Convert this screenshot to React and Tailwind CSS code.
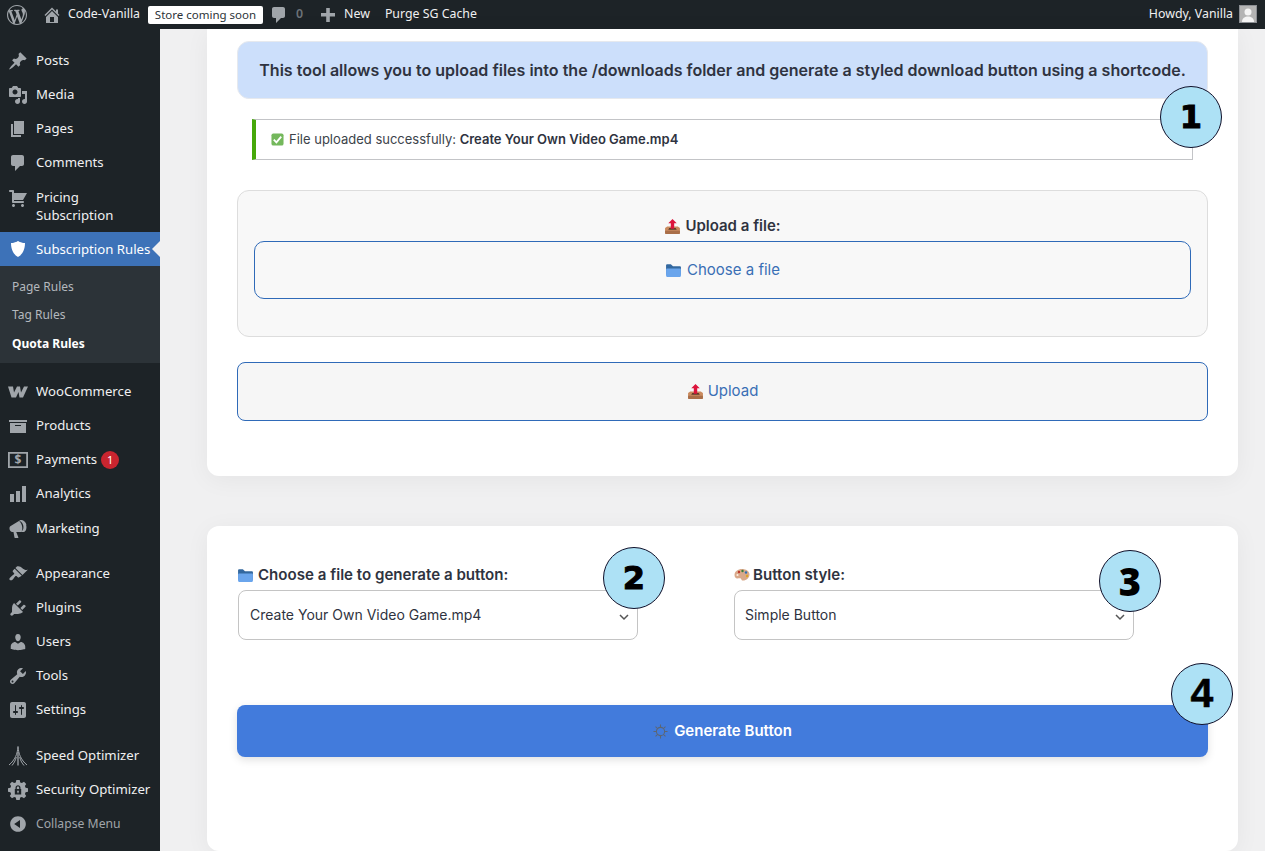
import React from "react";

const P = ({ d, className = "", size = 20 }) => (
  <svg viewBox="0 0 20 20" width={size} height={size} className={className} fill="currentColor" aria-hidden="true">
    <path d={d} fillRule="evenodd" />
  </svg>
);

const icons = {
  wp: "M20 10c0-5.51-4.5-10-10-10C4.48 0 0 4.49 0 10c0 5.52 4.48 10 10 10 5.5 0 10-4.48 10-10zM7.78 15.37L4.37 6.22c.55-.02 1.17-.08 1.17-.08.5-.06.44-1.13-.06-1.11 0 0-1.45.11-2.37.11-.18 0-.37 0-.58-.01C4.12 2.69 6.87 1.11 10 1.11c2.33 0 4.45.87 6.05 2.34-.68-.11-1.65.39-1.65 1.58 0 .74.45 1.36.9 2.1.35.61.55 1.36.55 2.46 0 1.49-1.4 5-1.4 5l-3.03-8.37c.54-.02.82-.17.82-.17.5-.05.44-1.25-.06-1.22 0 0-1.44.12-2.38.12-.87 0-2.33-.12-2.33-.12-.5-.03-.56 1.2-.06 1.22l.92.08 1.26 3.41zM17.41 10c.24-.64.74-1.87.43-4.25.7 1.29 1.05 2.71 1.05 4.25 0 3.29-1.73 6.24-4.4 7.78.97-2.59 1.94-5.2 2.92-7.78zM6.1 18.09C3.12 16.65 1.11 13.53 1.11 10c0-1.3.23-2.48.72-3.59C3.25 10.3 4.67 14.2 6.1 18.09zm4.03-6.63l2.58 6.98c-.86.29-1.76.45-2.71.45-.79 0-1.57-.11-2.29-.33.81-2.38 1.62-4.74 2.42-7.1z",
  home: "M16 8.5l1.53 1.53-1.06 1.06L10 4.62l-6.47 6.47-1.06-1.06L10 2.5l4 4v-2h2v4zm-6-2.46l6 5.99V18H4v-5.97zM12 17v-5H8v5h4z",
  comment: "M5 2h9c1.1 0 2 .9 2 2v7c0 1.1-.9 2-2 2h-2l-5 5v-5H5c-1.1 0-2-.9-2-2V4c0-1.1.9-2 2-2z",
  plus: "M17 8v3.5h-5.2V17H8.2v-5.5H3V8h5.2V3h3.6v5H17z",
  posts: "M10.44 3.02l1.82-1.82 6.36 6.35-1.83 1.82c-1.05-.68-2.48-.57-3.41.36l-.75.75c-.92.93-1.04 2.35-.35 3.41l-1.83 1.82-2.41-2.41-2.8 2.79c-.42.42-3.38 2.71-3.8 2.29s1.86-3.39 2.28-3.81l2.79-2.79L4.1 9.36l1.83-1.82c1.05.69 2.48.57 3.4-.36l.75-.75c.93-.92 1.05-2.35.36-3.41z",
  media: "M13 11V4c0-.55-.45-1-1-1h-1.67L9 1H5L3.67 3H2c-.55 0-1 .45-1 1v7c0 .55.45 1 1 1h10c.55 0 1-.45 1-1zM7 4.5c1.38 0 2.5 1.12 2.5 2.5S8.38 9.5 7 9.5 4.5 8.38 4.5 7 5.62 4.5 7 4.5zM14 6h5v10.5c0 1.38-1.12 2.5-2.5 2.5S14 17.88 14 16.5s1.12-2.5 2.5-2.5c.17 0 .34.02.5.05V9h-3V6zm-4 8.05V13h2v3.5c0 1.38-1.12 2.5-2.5 2.5S7 17.88 7 16.5 8.12 14 9.5 14c.17 0 .34.02.5.05z",
  pages: "M6 15V2h10v13H6zm-1 1h8v2H3V5h2v11z",
  cart: "M6 13h9c.55 0 1 .45 1 1s-.45 1-1 1H5c-.55 0-1-.45-1-1V4H2c-.55 0-1-.45-1-1s.45-1 1-1h3c.55 0 1 .45 1 1v2h13l-4 7H6v1zm-.5 3c.83 0 1.5.67 1.5 1.5S6.33 19 5.5 19 4 18.33 4 17.5 4.67 16 5.5 16zm9 0c.83 0 1.5.67 1.5 1.5s-.67 1.5-1.5 1.5-1.5-.67-1.5-1.5.67-1.5 1.5-1.5z",
  shield: "M10 2s3 2 7 2c0 11-7 14-7 14S3 15 3 4c4 0 7-2 7-2z",
  woo: "M0 4.500h5l1 6 3-6h3l1 6 3-6h4l-5 11h-3.500l-1-5.500-2.500 5.500H3.500z",
  archive: "M19 4v2H1V4h18zM2 7h16v10H2V7zm11 3V9H7v1h6z",
  pay: "M0 2h20v16H0V2zm1.800 1.800v12.400h16.400V3.800z",
  chart: "M18 18V2h-4v16h4zm-6 0V7H8v11h4zm-6 0v-8H2v8h4z",
  megaphone: "M18.15 5.94c.46 1.62.38 3.22-.02 4.48-.42 1.28-1.26 2.18-2.3 2.48-.16.06-.26.06-.4.06-.06.02-.12.02-.18.02-.06.02-.14.02-.22.02h-6.8l2.22 5.5c.02.14-.06.26-.14.34-.08.1-.24.16-.34.16H6.95c-.1 0-.26-.06-.34-.16-.08-.08-.16-.2-.14-.34l-1-5.5H4.25l-.02-.02c-.5.06-1.08-.18-1.54-.62s-.88-1.08-1.06-1.88c-.24-.8-.2-1.56-.02-2.2.2-.62.58-1.08 1.06-1.3l.02-.02 9-5.4c.1-.06.18-.1.24-.16.06-.04.14-.08.24-.12.16-.08.28-.12.5-.18 1.04-.3 2.24.1 3.3.9 1.04.82 1.96 2.1 2.42 3.7zm-4.58 5.98h-.02c.4-.1.74-.34 1.04-.7.58-.7.86-1.76.86-3.04-.02-.64-.1-1.3-.28-1.98-.46-1.62-1.36-2.88-2.42-3.6-.52-.34-1.06-.56-1.56-.62.44.36.42.4.98 1.12l.1.12.06.08c.74.94 1.28 2.1 1.64 3.42.34 1.3.42 2.56.26 3.72-.18 1.14-.62 2.12-1.24 2.76z",
  appearance: "M14.48 11.06L7.41 3.99l1.5-1.5c.5-.56 2.3-.47 3.51.32 1.21.8 1.43 1.28 2.91 2.1 1.18.64 2.45 1.26 4.45.85zm-.71.71L6.7 4.7 4.93 6.47c-.39.39-.39 1.02 0 1.41l1.06 1.06c.39.39.39 1.03 0 1.42-.6.6-1.43 1.11-2.21 1.69-.35.26-.7.53-1.01.84C1.43 13.71.96 15.12 1.75 15.9c.78.79 2.19.32 3.01-.51.31-.31.58-.66.84-1.01.58-.78 1.09-1.61 1.69-2.21.39-.39 1.02-.39 1.41 0l1.06 1.06c.39.39 1.02.39 1.41 0z",
  plugins: "M13.11 4.36L9.87 7.6 8 5.73l3.24-3.24c.35-.34 1.05-.2 1.56.32.52.51.66 1.21.31 1.55zm-8 1.77l.91-1.12 9.01 9.01-1.19.84c-.71.71-2.63 1.16-3.82 1.16H6.14L4.9 17.26c-.59.59-1.54.59-2.12 0-.59-.58-.59-1.53 0-2.12l1.24-1.24v-3.88c0-1.13.4-3.19 1.09-3.89zm7.26 3.97l3.24-3.24c.34-.35 1.04-.21 1.55.31.52.51.66 1.21.31 1.55l-3.24 3.25z",
  users: "M10 9.25c-2.27 0-2.73-3.44-2.73-3.44C7 4.02 7.82 2 9.97 2c2.16 0 2.98 2.02 2.71 3.81 0 0-.41 3.44-2.68 3.44zm0 2.57L12.72 10c2.39 0 4.52 2.33 4.52 4.53v2.49s-3.65 1.13-7.24 1.13c-3.65 0-7.24-1.13-7.24-1.13v-2.49c0-2.25 1.94-4.48 4.47-4.48z",
  tools: "M16.68 9.77c-1.34 1.34-3.3 1.67-4.95.99l-5.41 6.52c-.99.99-2.59.99-3.58 0s-.99-2.59 0-3.57l6.52-5.42c-.68-1.65-.35-3.61.99-4.95 1.28-1.28 3.12-1.62 4.72-1.06l-2.89 2.89 2.82 2.82 2.86-2.87c.53 1.58.18 3.39-1.08 4.65zM3.81 16.21c.4.39 1.04.39 1.43 0 .4-.4.4-1.04 0-1.43-.39-.4-1.03-.4-1.43 0-.39.39-.39 1.03 0 1.43z",
  settings: "M18 16V4c0-1.1-.9-2-2-2H4c-1.1 0-2 .9-2 2v12c0 1.1.9 2 2 2h12c1.1 0 2-.9 2-2zM8 11h1c.55 0 1 .45 1 1s-.45 1-1 1H8v1.5c0 .28-.22.5-.5.5s-.5-.22-.5-.5V13H6c-.55 0-1-.45-1-1s.45-1 1-1h1V5.5c0-.28.22-.5.5-.5s.5.22.5.5V11zm5-2h-1c-.55 0-1-.45-1-1s.45-1 1-1h1V5.5c0-.28.22-.5.5-.5s.5.22.5.5V7h1c.55 0 1 .45 1 1s-.45 1-1 1h-1v5.5c0 .28-.22.5-.5.5s-.5-.22-.5-.5V9z",
  gear: "M8.300 0h3.400l.5 2.400 1.700.7L16 1.800l2.200 2.200-1.300 2.100.7 1.700 2.400.5v3.400l-2.400.5-.7 1.700 1.300 2.100-2.200 2.200-2.100-1.300-1.700.7-.5 2.400H8.300l-.5-2.400-1.700-.7L4 18.200 1.800 16l1.300-2.100-.7-1.700L0 11.700V8.300l2.400-.5.7-1.700L1.800 4 4 1.800l2.100 1.300 1.700-.7L8.300 0zM10 5.200C8.600 5.200 7.500 6.300 7.500 7.700V9H6.800v5.500h6.400V9h-.7V7.700c0-1.400-1.100-2.500-2.500-2.500zM10 6.500c.7 0 1.200.5 1.200 1.200V9H8.800V7.700c0-.7.500-1.200 1.200-1.200zM10 10.500c.5 0 .9.400.9.900 0 .3-.2.600-.4.800v1.100h-1v-1.100c-.2-.2-.4-.5-.4-.8 0-.5.400-.9.900-.9z",
  collapse: "M10 2.160c4.330 0 7.840 3.510 7.840 7.840s-3.510 7.840-7.840 7.840S2.160 14.330 2.160 10 5.710 2.160 10 2.160zm2 11.720V6.120L6.180 9.970z",
};

const Speed = () => (
  <svg viewBox="0 0 20 20" width={20} height={20} fill="none" stroke="currentColor" strokeWidth="1" aria-hidden="true">
    <path d="M10 0.500C9.500 8 7 14 1 19" />
    <path d="M10 0.500C10.500 8 13 14 19 19" />
    <path d="M10 6V19.500" strokeWidth="1.300" />
    <path d="M8.300 11C7.500 15 5.500 17.500 4 19.500" />
    <path d="M11.700 11C12.500 15 14.500 17.500 16 19.500" />
  </svg>
);

const Upload = ({ size = 17 }) => (
  <svg viewBox="0 0 16 16" width={size} height={size} aria-hidden="true">
    <path d="M1 9.500 3 8h10l2 1.500V14a1 1 0 0 1-1 1H2a1 1 0 0 1-1-1V9.500z" fill="#c98a5e" />
    <path d="M1 12h14v2a1 1 0 0 1-1 1H2a1 1 0 0 1-1-1v-2z" fill="#a96e48" />
    <path d="M5 9.500h6l1 1.500H4z" fill="#5c3a2a" />
    <path d="M8 1 12 5H9.600v5H6.400V5H4z" fill="#dc143c" />
  </svg>
);

const Folder = ({ size = 17 }) => (
  <svg viewBox="0 0 16 16" width={size} height={size} aria-hidden="true">
    <path d="M1 3A1 1 0 0 1 2 2h3.500L7.500 4H14a1 1 0 0 1 1 1v7H1V3z" fill="#33689f" />
    <path d="M1 7a1 1 0 0 1 1-1h12a1 1 0 0 1 1 1v6a1 1 0 0 1-1 1H2a1 1 0 0 1-1-1V7z" fill="#6aa5ec" />
  </svg>
);

const Palette = ({ size = 16 }) => (
  <svg viewBox="0 0 16 16" width={size} height={size} aria-hidden="true">
    <path d="M8 2c4 0 7.500 2.200 7.500 5.500S12.500 13.500 9 13.500c-1.500 0-1.500-1-2-1.800-.5-.8-2-.5-3.500-.3C2 11.600.5 10.500.5 8 .5 4.500 4 2 8 2z" fill="#d9a98a" />
    <circle cx="5" cy="5" r="1.200" fill="#c0392b" />
    <circle cx="8.500" cy="4" r="1.200" fill="#3b7d3b" />
    <circle cx="12" cy="5.500" r="1.200" fill="#2f6fb5" />
    <circle cx="13" cy="9" r="1.200" fill="#e0a526" />
    <circle cx="3.500" cy="8" r="1.100" fill="#fbeee2" />
  </svg>
);

const Check = () => (
  <svg viewBox="0 0 14 14" width={13} height={13} aria-hidden="true">
    <rect x="0.500" y="0.500" width="13" height="13" rx="2" fill="#74b85c" />
    <path d="M3 7.200 5.800 10 11 3.800" fill="none" stroke="#fff" strokeWidth="2" />
  </svg>
);

const Chevron = () => (
  <svg viewBox="0 0 12 12" width={12} height={12} fill="none" stroke="#555" strokeWidth="1.500" className="mt-[3px]" aria-hidden="true">
    <path d="M2 4l4 4 4-4" />
  </svg>
);

const GearOutline = () => (
  <svg viewBox="0 0 16 16" width={15} height={15} fill="none" stroke="#5d6673" strokeWidth="1.100" aria-hidden="true">
    <circle cx="8" cy="8" r="4.400" />
    <path d="M8 .5v3M8 12.500v3M.5 8h3M12.500 8h3M2.700 2.700l2.100 2.100M11.200 11.200l2.100 2.100M2.700 13.300l2.100-2.100M11.200 4.800l2.100-2.100" />
  </svg>
);

const menu1 = [
  { i: "posts", t: "Posts" },
  { i: "media", t: "Media" },
  { i: "pages", t: "Pages" },
  { i: "comment", t: "Comments" },
];
const menu2 = [
  { i: "woo", t: "WooCommerce" },
  { i: "archive", t: "Products" },
  { i: "pay", t: "Payments", pay: true },
  { i: "chart", t: "Analytics" },
  { i: "megaphone", t: "Marketing", extra: "mt-[1px]" },
];
const menu3 = [
  { i: "appearance", t: "Appearance" },
  { i: "plugins", t: "Plugins" },
  { i: "users", t: "Users" },
  { i: "tools", t: "Tools" },
  { i: "settings", t: "Settings" },
];
const menu4 = [
  { i: "speed", t: "Speed Optimizer" },
  { i: "gear", t: "Security Optimizer" },
];

const Row = ({ i, t, pay, extra = "" }) => (
  <div className={`flex h-[34px] items-center text-[#f0f0f1] ${extra}`}>
    <div className="relative flex w-[36px] justify-center text-[#a0a5aa]">
      {i === "speed" ? <Speed /> : <P d={icons[i]} />}
      {pay && (
        <span className="absolute inset-0 flex items-center justify-center text-[12px] font-bold leading-none">$</span>
      )}
    </div>
    <span>{t}</span>
    {pay && (
      <span className="ml-[4px] flex h-[18px] w-[18px] items-center justify-center rounded-full bg-[#c9252f] text-[11px] text-white">
        1
      </span>
    )}
  </div>
);

const Badge = ({ n, className, font }) => (
  <div
    className={`absolute flex h-[62px] w-[62px] items-center justify-center rounded-full border border-[#10102a] bg-[#ade1f5] text-black ${className} ${font}`}
  >
    {n}
  </div>
);

export default function App() {
  return (
    <div className="relative flex h-[851px] w-full flex-col overflow-hidden bg-[#f0f0f1] font-['Inter',sans-serif] text-[#2f3340]">
      <header className="flex h-[29px] shrink-0 items-center justify-between bg-[#1d2327] pl-[7px] pr-[8px] font-['Noto_Sans',sans-serif] text-[12.35px] text-[#f0f0f1]">
        <div className="flex items-center">
          <P d={icons.wp} className="text-[#a0a5aa]" />
          <P d={icons.home} className="ml-[15px] text-[#a0a5aa]" />
          <span className="ml-[6px]">Code-Vanilla</span>
          <span className="ml-[8px] flex h-[18px] w-[115px] items-center justify-center rounded-[2px] bg-white text-[11.5px] text-[#2c3338]">
            Store coming soon
          </span>
          <P d={icons.comment} className="ml-[6px] text-[#a0a5aa]" />
          <span className="ml-[7px] font-semibold text-[#6c7278]">0</span>
          <P d={icons.plus} className="ml-[15px] text-[#a0a5aa]" />
          <span className="ml-[6px]">New</span>
          <span className="ml-[15px]">Purge SG Cache</span>
        </div>
        <div className="flex items-center gap-[6px]">
          <span>Howdy, Vanilla</span>
          <div className="flex h-[18px] w-[18px] items-end justify-center overflow-hidden border border-[#8c8f94] bg-[#b4b4b4]">
            <svg viewBox="0 0 16 16" width={16} height={16} fill="#f4f4f4" aria-hidden="true">
              <circle cx="8" cy="6" r="3.500" />
              <path d="M2 16c0-4 3-5.500 6-5.500s6 1.500 6 5.500z" />
            </svg>
          </div>
        </div>
      </header>

      <div className="flex min-h-0 flex-1">
        <aside className="flex w-[160px] shrink-0 flex-col bg-[#1d2327] pt-[15px] font-['Noto_Sans',sans-serif] text-[13.2px]">
          {menu1.map((m) => (
            <Row key={m.t} {...m} />
          ))}
          <div className="flex h-[52px] pt-[8px] text-[#f0f0f1]">
            <div className="flex w-[36px] justify-center text-[#a0a5aa]">
              <P d={icons.cart} />
            </div>
            <span className="leading-[18px]">
              Pricing
              <br />
              Subscription
            </span>
          </div>
          <div className="relative flex h-[34px] items-center bg-[#3d72b8] text-white">
            <div className="flex w-[36px] justify-center">
              <P d={icons.shield} />
            </div>
            <span className="pt-[1px]">Subscription Rules</span>
            <div className="absolute right-0 h-0 w-0 border-y-[8px] border-r-[8px] border-y-transparent border-r-[#f0f0f1]" />
          </div>
          <div className="flex h-[97px] flex-col bg-[#2c3338] pl-[12px] pt-[7px] text-[12px] text-[#b4b9be]">
            <div className="flex h-[28px] items-center">Page Rules</div>
            <div className="flex h-[28px] items-center">Tag Rules</div>
            <div className="flex h-[29px] items-center font-bold text-white">Quota Rules</div>
          </div>
          <div className="mt-[12px]">
            {menu2.map((m) => (
              <Row key={m.t} {...m} />
            ))}
          </div>
          <div className="mt-[11px]">
            {menu3.map((m) => (
              <Row key={m.t} {...m} />
            ))}
          </div>
          <div className="mt-[12px]">
            {menu4.map((m) => (
              <Row key={m.t} {...m} />
            ))}
          </div>
          <div className="flex h-[34px] items-center text-[#a0a5aa]">
            <div className="flex w-[36px] justify-center">
              <P d={icons.collapse} />
            </div>
            <span className="text-[12.2px]">Collapse Menu</span>
          </div>
        </aside>

        <main className="flex min-w-0 flex-1 flex-col gap-[50px] pl-[47px] pr-[27px]">
          <section className="h-[447px] shrink-0 rounded-b-xl bg-white px-[30px] pt-[12px] shadow-[0_4px_24px_rgba(0,0,0,0.05)]">
            <div className="flex h-[58px] items-center justify-center rounded-xl border border-[#e6e9ee] bg-[#ccdffb] text-[16.03px] font-semibold">
              This tool allows you to upload files into the /downloads folder and generate a styled download button using a shortcode.
            </div>
            <div className="mx-[15px] mt-[20px] flex h-[41px] items-center gap-[5px] border border-l-4 border-[#c3c4c7] border-l-[#46a80a] bg-white pl-[15px] text-[13px] text-[#3c434a]">
              <Check />
              <span>
                File uploaded successfully: <span className="font-semibold text-[#2f3340]">Create Your Own Video Game.mp4</span>
              </span>
            </div>
            <div className="mt-[30px] flex h-[147px] flex-col rounded-xl border border-[#dddddd] bg-[#f8f8f8] px-[16px] pt-[24px]">
              <div className="flex h-[22px] items-center justify-center gap-[4px] text-[15px] font-semibold">
                <Upload />
                Upload a file:
              </div>
              <button className="mt-[4px] flex h-[58px] items-center justify-center gap-[5px] rounded-[10px] border border-[#2f6ab8] text-[15px] text-[#3a6fb5]">
                <Folder />
                Choose a file
              </button>
            </div>
            <button className="mt-[25px] flex h-[59px] w-full items-center justify-center gap-[4px] rounded-lg border border-[#2f6ab8] bg-[#f6f6f6] text-[15px] text-[#3a6fb5]">
              <Upload />
              Upload
            </button>
          </section>

          <section className="min-h-0 flex-1 rounded-xl bg-white px-[30px] pt-[38px] shadow-[0_4px_24px_rgba(0,0,0,0.05)]">
            <div className="flex gap-[96px] pl-[1px]">
              <div className="w-[400px]">
                <div className="-ml-[1px] flex h-[22px] items-center gap-[4px] text-[15.1px] font-semibold">
                  <Folder />
                  Choose a file to generate a button:
                </div>
                <div className="mt-[4px] flex h-[50px] items-center justify-between rounded-lg border border-[#c4c4c4] bg-white pl-[11px] pr-[7px] text-[14px]">
                  <span className="pb-[2px]">Create Your Own Video Game.mp4</span>
                  <Chevron />
                </div>
              </div>
              <div className="w-[400px]">
                <div className="flex h-[22px] items-center gap-[3px] text-[15.1px] font-semibold">
                  <Palette />
                  Button style:
                </div>
                <div className="mt-[4px] flex h-[50px] items-center justify-between rounded-lg border border-[#c4c4c4] bg-white pl-[10px] pr-[7px] text-[14px]">
                  <span className="pb-[2px]">Simple Button</span>
                  <Chevron />
                </div>
              </div>
            </div>
            <button className="mt-[65px] flex h-[52px] w-full items-center justify-center gap-[6px] rounded-lg bg-[#427bdc] text-[15px] font-semibold text-white shadow-[0_3px_8px_rgba(0,0,0,0.12)]">
              <GearOutline />
              Generate Button
            </button>
          </section>
        </main>
      </div>

      <Badge n="1" className="left-[1160px] top-[86px]" font="font-['DejaVu_Sans',sans-serif] text-[32px] font-bold [-webkit-text-stroke:1px_black]" />
      <Badge n="2" className="left-[603px] top-[547px]" font="font-['DejaVu_Sans',sans-serif] text-[32px] font-bold [-webkit-text-stroke:1px_black]" />
      <Badge n="3" className="left-[1099px] top-[550px]" font="font-['Open_Sans',sans-serif] text-[38px] font-extrabold" />
      <Badge n="4" className="left-[1171px] top-[663px]" font="font-['Liberation_Sans',sans-serif] text-[41px] font-bold [-webkit-text-stroke:0.5px_black]" />
    </div>
  );
}
